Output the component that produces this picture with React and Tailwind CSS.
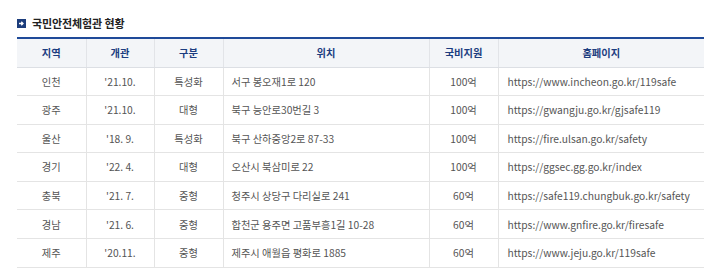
const rows = [
  ['인천', "'21.10.", '특성화', '서구 봉오재1로 120', '100억', 'https://www.incheon.go.kr/119safe'],
  ['광주', "'21.10.", '대형', '북구 능안로30번길 3', '100억', 'https://gwangju.go.kr/gjsafe119'],
  ['울산', "'18. 9.", '특성화', '북구 산하중앙2로 87-33', '100억', 'https://fire.ulsan.go.kr/safety'],
  ['경기', "'22. 4.", '대형', '오산시 북삼미로 22', '100억', 'https://ggsec.gg.go.kr/index'],
  ['충북', "'21. 7.", '중형', '청주시 상당구 다리실로 241', '60억', 'https://safe119.chungbuk.go.kr/safety'],
  ['경남', "'21. 6.", '중형', '합천군 용주면 고품부흥1길 10-28', '60억', 'https://www.gnfire.go.kr/firesafe'],
  ['제주', "'20.11.", '중형', '제주시 애월읍 평화로 1885', '60억', 'https://www.jeju.go.kr/119safe'],
];

const heads = ['지역', '개관', '구분', '위치', '국비지원', '홈페이지'];

function TitleIcon() {
  return (
    <svg width="9" height="9" viewBox="0 0 9 9" className="shrink-0">
      <rect width="9" height="9" fill="#1c3d7c" />
      <path d="M2 4.5h4M4.3 2.8l1.7 1.7-1.7 1.7" stroke="#fff" strokeWidth="1.3" fill="none" />
    </svg>
  );
}

export default function App() {
  return (
    <div
      className="w-[720px] h-[268px] bg-white pl-[17px] pt-[14px] overflow-hidden"
      style={{ fontFamily: '"Noto Sans CJK KR", "Noto Sans", sans-serif' }}
    >
      <div className="flex items-center gap-[6px] h-[16px] pt-[2px]">
        <TitleIcon />
        <h2 className="text-[11px] font-bold text-[#222] tracking-[-0.01em]">국민안전체험관 현황</h2>
      </div>

      <table className="mt-[7px] w-[687px] table-fixed border-collapse border-t-2 border-[#1f4a99] text-[10.25px] text-[#555]">
        <colgroup>
          <col className="w-[69px]" />
          <col className="w-[68px]" />
          <col className="w-[69px]" />
          <col className="w-[206px]" />
          <col className="w-[69px]" />
          <col className="w-[206px]" />
        </colgroup>
        <thead>
          <tr className="h-[29px] bg-[#f3f5f8]">
            {heads.map((h, i) => (
              <th
                key={h}
                className={`p-0 font-bold text-[#1c3d80] text-center border-b border-[#dcdfe4] ${i > 0 ? 'border-l border-l-[#e2e4e8]' : ''}`}
              >
                {h}
              </th>
            ))}
          </tr>
        </thead>
        <tbody>
          {rows.map((r) => (
            <tr key={r[0]} className="h-[28.6px] border-b border-[#e4e4e4]">
              <td className="p-0 text-center">{r[0]}</td>
              <td className="p-0 text-center border-l border-[#e4e4e4]">{r[1]}</td>
              <td className="p-0 text-center border-l border-[#e4e4e4]">{r[2]}</td>
              <td className="py-0 pl-[8px] text-left border-l border-[#e4e4e4] whitespace-nowrap">{r[3]}</td>
              <td className="p-0 text-center border-l border-[#e4e4e4]">{r[4]}</td>
              <td className="py-0 pl-[9px] text-left border-l border-[#e4e4e4] whitespace-nowrap">{r[5]}</td>
            </tr>
          ))}
        </tbody>
      </table>
    </div>
  );
}
